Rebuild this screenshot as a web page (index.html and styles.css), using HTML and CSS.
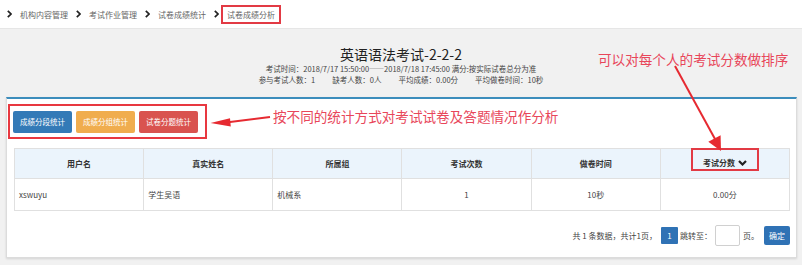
FILE: index.html
```html
<!DOCTYPE html>
<html lang="zh">
<head>
<meta charset="utf-8">
<link rel="stylesheet" href="styles.css">
</head>
<body>
<nav class="crumbs">
  <div class="crumb"><svg class="chev" viewBox="0 0 5 8" width="5" height="8"><polyline points="0.8,0.8 4,4 0.8,7.2"/></svg><span>机构内容管理</span></div>
  <div class="crumb"><svg class="chev" viewBox="0 0 5 8" width="5" height="8"><polyline points="0.8,0.8 4,4 0.8,7.2"/></svg><span>考试作业管理</span></div>
  <div class="crumb"><svg class="chev" viewBox="0 0 5 8" width="5" height="8"><polyline points="0.8,0.8 4,4 0.8,7.2"/></svg><span>试卷成绩统计</span></div>
  <div class="crumb"><svg class="chev" viewBox="0 0 5 8" width="5" height="8"><polyline points="0.8,0.8 4,4 0.8,7.2"/></svg><span class="active">试卷成绩分析</span></div>
</nav>

<header class="head">
  <h1 class="title">英语语法考试-2-2-2</h1>
  <p class="meta">考试时间：2018/7/17 15:50:00——2018/7/18 17:45:00 满分:按实际试卷总分为准</p>
  <p class="meta stats"><span>参与考试人数：1</span><span>缺考人数：0人</span><span>平均成绩：0.00分</span><span>平均做卷时间：10秒</span></p>
</header>

<section class="panel">
  <div class="btn-group">
    <button class="btn blue">成绩分段统计</button>
    <button class="btn orange">成绩分组统计</button>
    <button class="btn red">试卷分题统计</button>
  </div>

  <table class="grid">
    <thead>
      <tr>
        <th>用户名</th>
        <th>真实姓名</th>
        <th>所属组</th>
        <th>考试次数</th>
        <th>做卷时间</th>
        <th class="sort-th"><span class="sort">考试分数<svg class="down" viewBox="0 0 9 6" width="9" height="6"><polyline points="1,1 4.5,4.5 8,1"/></svg></span></th>
      </tr>
    </thead>
    <tbody>
      <tr>
        <td class="left">xswuyu</td>
        <td class="left">学生吴语</td>
        <td class="left">机械系</td>
        <td>1</td>
        <td>10秒</td>
        <td>0.00分</td>
      </tr>
    </tbody>
  </table>

  <div class="pager">
    <span>共 1 条数据，共计1页，</span>
    <span class="page-no">1</span>
    <span>跳转至：</span>
    <input class="jump" type="text">
    <span>页。</span>
    <button class="ok">确定</button>
  </div>
</section>

<p class="note note-top">可以对每个人的考试分数做排序</p>
<p class="note note-mid">按不同的统计方式对考试试卷及答题情况作分析</p>

<svg class="arrows" viewBox="0 0 802 265" width="802" height="265">
  <line x1="270" y1="117" x2="228" y2="122.3"/>
  <polygon points="210.5,123 230,118.3 230.8,126.6"/>
  <line x1="675" y1="66" x2="715" y2="139"/>
  <polygon points="721,151 708.3,141.8 720.6,135.2"/>
</svg>
</body>
</html>
```

FILE: styles.css
```css
* { box-sizing: border-box; }

html, body {
  margin: 0;
  padding: 0;
}

body {
  position: relative;
  width: 802px;
  height: 265px;
  overflow: hidden;
  background: #f1f1f1;
  font-family: "Noto Sans CJK SC", "Liberation Sans", sans-serif;
  font-size: 8px;
  color: #333;
}

/* breadcrumb */
.crumbs {
  display: flex;
  align-items: center;
  height: 29px;
  padding-left: 7px;
  background: #fff;
  border-bottom: 1px solid #e6e6e6;
  color: #666;
  font-size: 8px;
  line-height: 11px;
}

.crumb {
  display: flex;
  align-items: center;
  margin-right: 8px;
}

.chev {
  fill: none;
  stroke: #222;
  stroke-width: 1.7;
  margin-right: 8px;
  flex: none;
}

.crumb:last-child .chev { margin-right: 2px; }

.active {
  border: 2px solid #e23a44;
  padding: 2px 4px;
  margin-top: 1px;
}

/* header */
.head {
  padding-top: 16px;
  text-align: center;
  height: 68px;
}

.title {
  margin: 0;
  font-size: 14px;
  line-height: 18px;
  font-weight: normal;
  color: #222;
}

.meta {
  margin: 0;
  font-size: 7.5px;
  line-height: 11px;
  color: #444;
}

.stats {
  display: flex;
  justify-content: center;
  gap: 17px;
}

/* panel */
.panel {
  margin: 0 5px 0 6px;
  background: #fff;
  border-top: 2px solid #3c8dbc;
  border-left: 1px solid #dcdcdc;
  border-right: 1px solid #dcdcdc;
  border-bottom: 1px solid #dcdcdc;
  box-shadow: 0 1px 2px rgba(0,0,0,0.12);
  padding: 5px 7px 11px 1px;
}

.btn-group {
  display: inline-flex;
  gap: 4px;
  border: 2px solid #e83840;
  padding: 5px 7px 4px 3px;
}

.btn {
  height: 22px;
  padding: 0 6px;
  border: none;
  border-radius: 2px;
  color: #fff;
  font-family: inherit;
  font-size: 7.5px;
  line-height: 22px;
  width: 59px;
}

.btn.blue { background: #337ab7; }
.btn.orange { background: #f0ad4e; }
.btn.red { background: #d9534f; }

/* table */
.grid {
  width: 776px;
  margin: 9px 0 0 6px;
  border-collapse: collapse;
  table-layout: fixed;
}

.grid th, .grid td {
  border: 1px solid #e0e0e0;
  text-align: center;
  font-size: 8px;
  color: #333;
}

.grid th {
  height: 30px;
  padding: 0;
  background: #ebf4fc;
  font-weight: bold;
  vertical-align: middle;
}

.grid th.sort-th { vertical-align: top; }

.sort {
  display: inline-flex;
  align-items: center;
  gap: 3px;
  border: 2px solid #e23a44;
  padding: 7px 10px 1px;
  line-height: 11px;
  margin-top: -1px;
}

.down {
  fill: none;
  stroke: #222;
  stroke-width: 2.2;
}

.grid td {
  height: 32px;
  padding: 0;
  color: #444;
}

.grid td.left {
  text-align: left;
  padding-left: 4px;
}

/* pager */
.pager {
  display: flex;
  justify-content: flex-end;
  align-items: center;
  gap: 2px;
  margin-top: 14px;
  margin-right: -1px;
  font-size: 8px;
  color: #444;
  height: 21px;
}

.page-no {
  width: 17px;
  height: 17px;
  background: #2f72b5;
  color: #fff;
  text-align: center;
  line-height: 17px;
  border-radius: 1px;
  margin-left: 2px;
}

.jump {
  width: 25px;
  height: 21px;
  border: 1px solid #d0d0d0;
  border-radius: 2px;
  margin: 0 1px;
  padding: 0;
}

.ok {
  width: 26px;
  height: 19px;
  border: none;
  border-radius: 2px;
  background: #2f72b5;
  color: #fff;
  font-family: inherit;
  font-size: 8px;
  padding: 0;
  margin-left: 3px;
}

/* annotations (overlay) */
.note {
  position: absolute;
  margin: 0;
  color: #e8465a;
  font-size: 13.6px;
  line-height: 18px;
  white-space: nowrap;
}

.note-top { left: 598px; top: 50px; }
.note-mid { left: 273px; top: 107px; }

.arrows {
  position: absolute;
  left: 0;
  top: 0;
  pointer-events: none;
}

.arrows line {
  stroke: #e62a31;
  stroke-width: 2;
}

.arrows polygon { fill: #e62a31; }
```
